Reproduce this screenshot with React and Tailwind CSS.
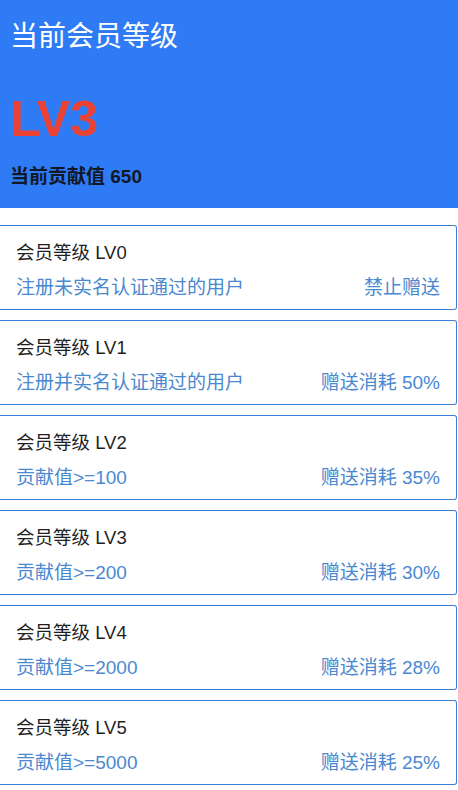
const levels = [
  { lv: "LV0", cond: "注册未实名认证通过的用户", gift: "禁止赠送" },
  { lv: "LV1", cond: "注册并实名认证通过的用户", gift: "赠送消耗 50%" },
  { lv: "LV2", cond: "贡献值>=100", gift: "赠送消耗 35%" },
  { lv: "LV3", cond: "贡献值>=200", gift: "赠送消耗 30%" },
  { lv: "LV4", cond: "贡献值>=2000", gift: "赠送消耗 28%" },
  { lv: "LV5", cond: "贡献值>=5000", gift: "赠送消耗 25%" },
];

export default function App() {
  return (
    <div
      className="w-[458px] h-[790px] overflow-hidden bg-white"
      style={{ fontFamily: '"Liberation Sans", "Noto Sans CJK SC", sans-serif' }}
    >
      {/* Header */}
      <div className="h-[208px] bg-[#2f7bf5] px-[10px] pt-[18px]">
        <h1 className="text-[28px] leading-[38px] text-white">当前会员等级</h1>
        <div className="mt-[35px] text-[50px] leading-[56px] font-bold text-[#ea4336]">LV3</div>
        <div className="mt-[18px] text-[19px] leading-[24px] font-bold text-[#111827]">当前贡献值 650</div>
      </div>

      {/* Level list */}
      <div className="mt-[17px] flex flex-col gap-[10px]">
        {levels.map((l) => (
          <LevelCard key={l.lv} {...l} />
        ))}
      </div>
    </div>
  );
}

function LevelCard({ lv, cond, gift }) {
  return (
    <div className="h-[85px] w-[457px] border-y-[1.5px] border-r-[1.5px] border-[#3b7dd8] rounded-r-[3px] pl-[16px] pr-[16px] pt-[14px]">
      <div className="text-[18.5px] leading-[26px] text-[#1f1f1f]">会员等级 {lv}</div>
      <div className="mt-[9px] flex justify-between text-[19px] leading-[26px] text-[#4a88d0]">
        <span>{cond}</span>
        <span>{gift}</span>
      </div>
    </div>
  );
}
